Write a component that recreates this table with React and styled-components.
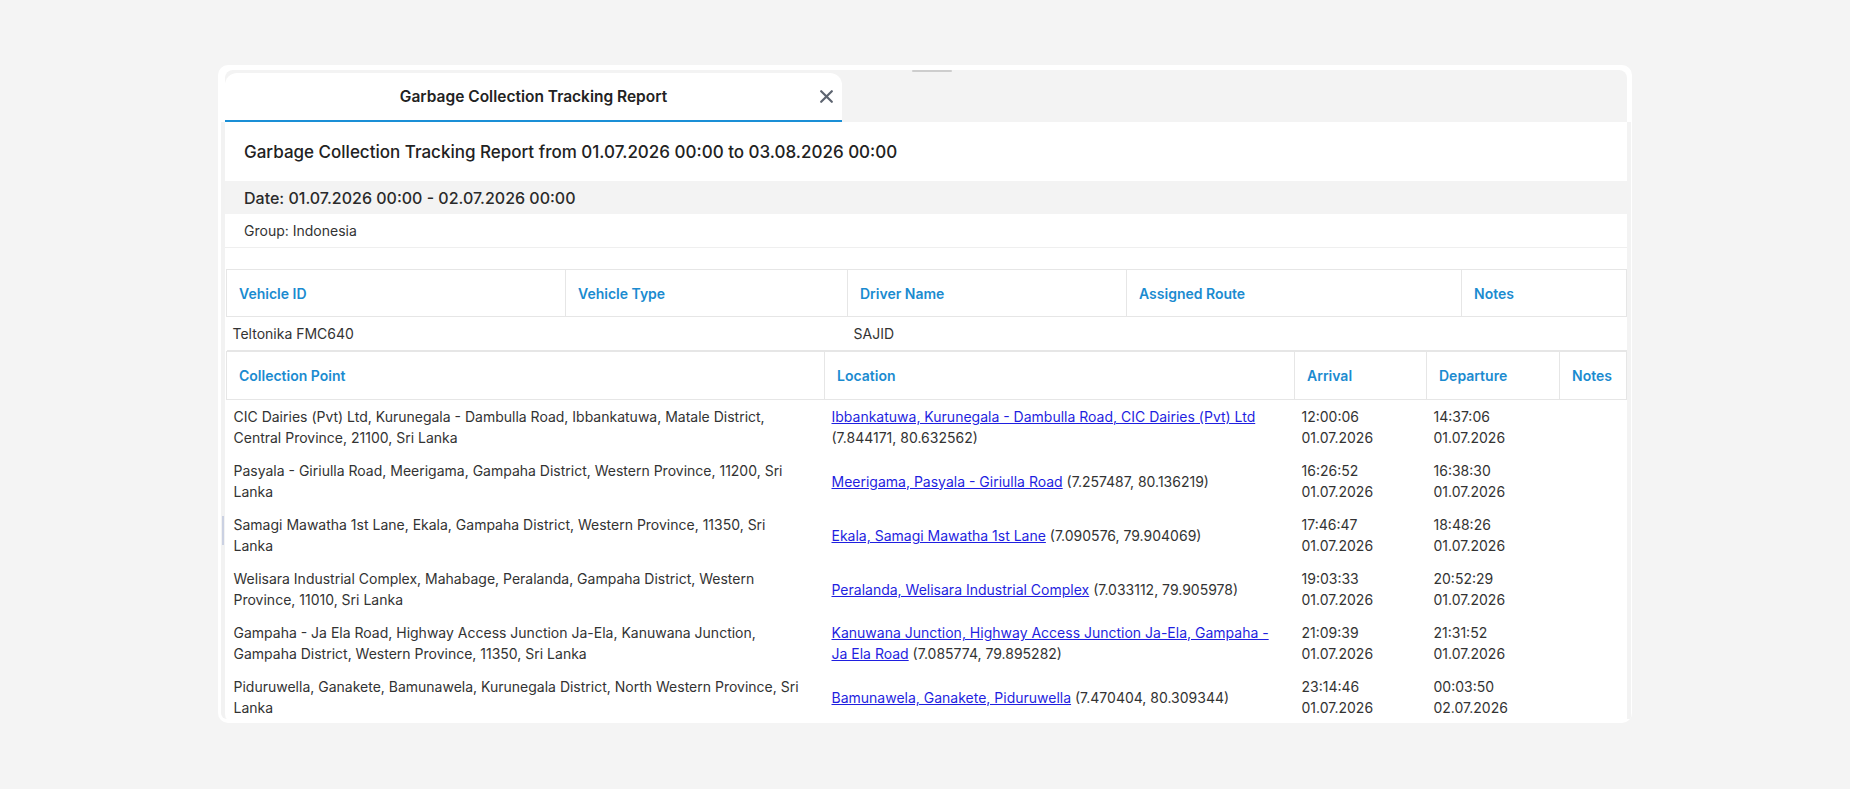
import styled, { createGlobalStyle } from 'styled-components';

const GlobalStyle = createGlobalStyle`
  body {
    margin: 0;
    background: #f4f4f4;
    font-family: Inter, "Noto Sans", sans-serif;
    color: #333;
  }
`;

const Page = styled.div`
  padding: 65px 218px 0;
`;

const Card = styled.div`
  position: relative;
  height: 658px;
  box-sizing: border-box;
  background: #fff;
  border-radius: 10px;
  padding: 5px 1px 4px 3px;
  display: flex;
  flex-direction: column;
  overflow: hidden;
`;

const TabBar = styled.div`
  position: relative;
  height: 52px;
  margin: 0 4px;
  background: #f3f3f3;
  border-radius: 8px 8px 0 0;
  display: flex;
  align-items: flex-end;
  flex-shrink: 0;
`;

const Handle = styled.span`
  position: absolute;
  top: 0;
  left: 687px;
  width: 40px;
  height: 2px;
  border-radius: 1px;
  background: #cdcdcd;
`;

const Tab = styled.div`
  width: 617px;
  height: 49px;
  box-sizing: border-box;
  background: #fff;
  border-radius: 12px 12px 0 0;
  border-bottom: 2px solid #1a8fd6;
  display: grid;
  grid-template-columns: 1fr auto 1fr;
  align-items: center;
`;

const TabTitle = styled.span`
  grid-column: 2;
  font-size: 15.5px;
  font-weight: 600;
  color: #222;
`;

const Close = styled.button`
  grid-column: 3;
  justify-self: end;
  margin-right: 9px;
  padding: 0;
  border: 0;
  background: none;
  display: flex;
  cursor: pointer;
`;

const ScrollBody = styled.div`
  flex: 1;
  overflow: hidden;
  border-left: 4px solid #f2f2f2;
  border-right: 4px solid #f3f3f3;
  border-radius: 0 0 0 6px;
`;

const Heading = styled.h2`
  margin: 0;
  height: 59px;
  padding-left: 19px;
  display: flex;
  align-items: center;
  font-size: 17px;
  font-weight: 500;
  color: #222;
`;

const DateBar = styled.div`
  height: 33px;
  padding-left: 19px;
  display: flex;
  align-items: center;
  background: #f3f3f3;
  font-size: 16px;
  font-weight: 500;
  color: #2a2a2a;
`;

const GroupRow = styled.div`
  height: 33px;
  padding-left: 19px;
  display: flex;
  align-items: center;
  border-bottom: 1px solid #efefef;
  font-size: 14px;
  color: #333;
`;

const Tables = styled.div`
  margin-top: 21px;
  padding: 0 1px;
`;

const Table = styled.table`
  width: 100%;
  table-layout: fixed;
  border-collapse: collapse;
  font-size: 14px;
`;

const Th = styled.th`
  height: ${p => p.$h || 46}px;
  padding: 0 12px;
  border: 1px solid #e6e6e6;
  text-align: left;
  font-weight: 600;
  color: #1b8bd0;
`;

const InfoCell = styled.td`
  height: 33px;
  padding: 0 6px;
  border-bottom: 1px solid #e6e6e6;
  color: #333;
`;

const Td = styled.td`
  padding: 6px ${p => p.$pr || 6}px 6px 7px;
  line-height: 21px;
  vertical-align: middle;
  color: #333;
`;

const Link = styled.a`
  color: #1f1fe0;
  text-decoration: underline;
`;

const Thumb = styled.span`
  position: absolute;
  left: 4px;
  top: 451px;
  width: 2px;
  height: 29px;
  background: #cbd1e2;
`;

const stops = [
  {
    point: 'CIC Dairies (Pvt) Ltd, Kurunegala - Dambulla Road, Ibbankatuwa, Matale District, Central Province, 21100, Sri Lanka',
    place: 'Ibbankatuwa, Kurunegala - Dambulla Road, CIC Dairies (Pvt) Ltd',
    coords: '(7.844171, 80.632562)',
    arr: ['12:00:06', '01.07.2026'],
    dep: ['14:37:06', '01.07.2026'],
  },
  {
    point: 'Pasyala - Giriulla Road, Meerigama, Gampaha District, Western Province, 11200, Sri Lanka',
    place: 'Meerigama, Pasyala - Giriulla Road',
    coords: '(7.257487, 80.136219)',
    arr: ['16:26:52', '01.07.2026'],
    dep: ['16:38:30', '01.07.2026'],
  },
  {
    point: 'Samagi Mawatha 1st Lane, Ekala, Gampaha District, Western Province, 11350, Sri Lanka',
    place: 'Ekala, Samagi Mawatha 1st Lane',
    coords: '(7.090576, 79.904069)',
    arr: ['17:46:47', '01.07.2026'],
    dep: ['18:48:26', '01.07.2026'],
  },
  {
    point: 'Welisara Industrial Complex, Mahabage, Peralanda, Gampaha District, Western Province, 11010, Sri Lanka',
    place: 'Peralanda, Welisara Industrial Complex',
    coords: '(7.033112, 79.905978)',
    arr: ['19:03:33', '01.07.2026'],
    dep: ['20:52:29', '01.07.2026'],
  },
  {
    point: 'Gampaha - Ja Ela Road, Highway Access Junction Ja-Ela, Kanuwana Junction, Gampaha District, Western Province, 11350, Sri Lanka',
    place: 'Kanuwana Junction, Highway Access Junction Ja-Ela, Gampaha - Ja Ela Road',
    coords: '(7.085774, 79.895282)',
    arr: ['21:09:39', '01.07.2026'],
    dep: ['21:31:52', '01.07.2026'],
  },
  {
    point: 'Piduruwella, Ganakete, Bamunawela, Kurunegala District, North Western Province, Sri Lanka',
    place: 'Bamunawela, Ganakete, Piduruwella',
    coords: '(7.470404, 80.309344)',
    arr: ['23:14:46', '01.07.2026'],
    dep: ['00:03:50', '02.07.2026'],
  },
];

function CloseIcon() {
  return (
    <svg width="13" height="13" viewBox="0 0 13 13">
      <path d="M1.2 1.2 11.8 11.8M11.8 1.2 1.2 11.8" stroke="#5d6470" strokeWidth="2.2" strokeLinecap="round" />
    </svg>
  );
}

export default function App() {
  return (
    <Page>
      <GlobalStyle />
      <Card>
        <TabBar>
          <Handle />
          <Tab>
            <TabTitle>Garbage Collection Tracking Report</TabTitle>
            <Close aria-label="close"><CloseIcon /></Close>
          </Tab>
        </TabBar>
        <ScrollBody>
          <Heading>Garbage Collection Tracking Report from 01.07.2026 00:00 to 03.08.2026 00:00</Heading>
          <DateBar>Date: 01.07.2026 00:00 - 02.07.2026 00:00</DateBar>
          <GroupRow>Group: Indonesia</GroupRow>
          <Tables>
            <Table>
              <colgroup>
                <col style={{ width: 339 }} />
                <col style={{ width: 282 }} />
                <col style={{ width: 279 }} />
                <col style={{ width: 335 }} />
                <col style={{ width: 165 }} />
              </colgroup>
              <thead>
                <tr>
                  <Th>Vehicle ID</Th>
                  <Th>Vehicle Type</Th>
                  <Th>Driver Name</Th>
                  <Th>Assigned Route</Th>
                  <Th>Notes</Th>
                </tr>
              </thead>
              <tbody>
                <tr>
                  <InfoCell>Teltonika FMC640</InfoCell>
                  <InfoCell />
                  <InfoCell>SAJID</InfoCell>
                  <InfoCell />
                  <InfoCell />
                </tr>
              </tbody>
            </Table>
            <Table>
              <colgroup>
                <col style={{ width: 598 }} />
                <col style={{ width: 470 }} />
                <col style={{ width: 132 }} />
                <col style={{ width: 133 }} />
                <col style={{ width: 67 }} />
              </colgroup>
              <thead>
                <tr>
                  <Th $h={47}>Collection Point</Th>
                  <Th $h={47}>Location</Th>
                  <Th $h={47}>Arrival</Th>
                  <Th $h={47}>Departure</Th>
                  <Th $h={47}>Notes</Th>
                </tr>
              </thead>
              <tbody>
                {stops.map((s, i) => (
                  <tr key={i}>
                    <Td $pr={17}>{s.point}</Td>
                    <Td $pr={14}><Link href="#">{s.place}</Link> {s.coords}</Td>
                    <Td>{s.arr[0]}<br />{s.arr[1]}</Td>
                    <Td>{s.dep[0]}<br />{s.dep[1]}</Td>
                    <Td />
                  </tr>
                ))}
              </tbody>
            </Table>
          </Tables>
        </ScrollBody>
        <Thumb />
      </Card>
    </Page>
  );
}
